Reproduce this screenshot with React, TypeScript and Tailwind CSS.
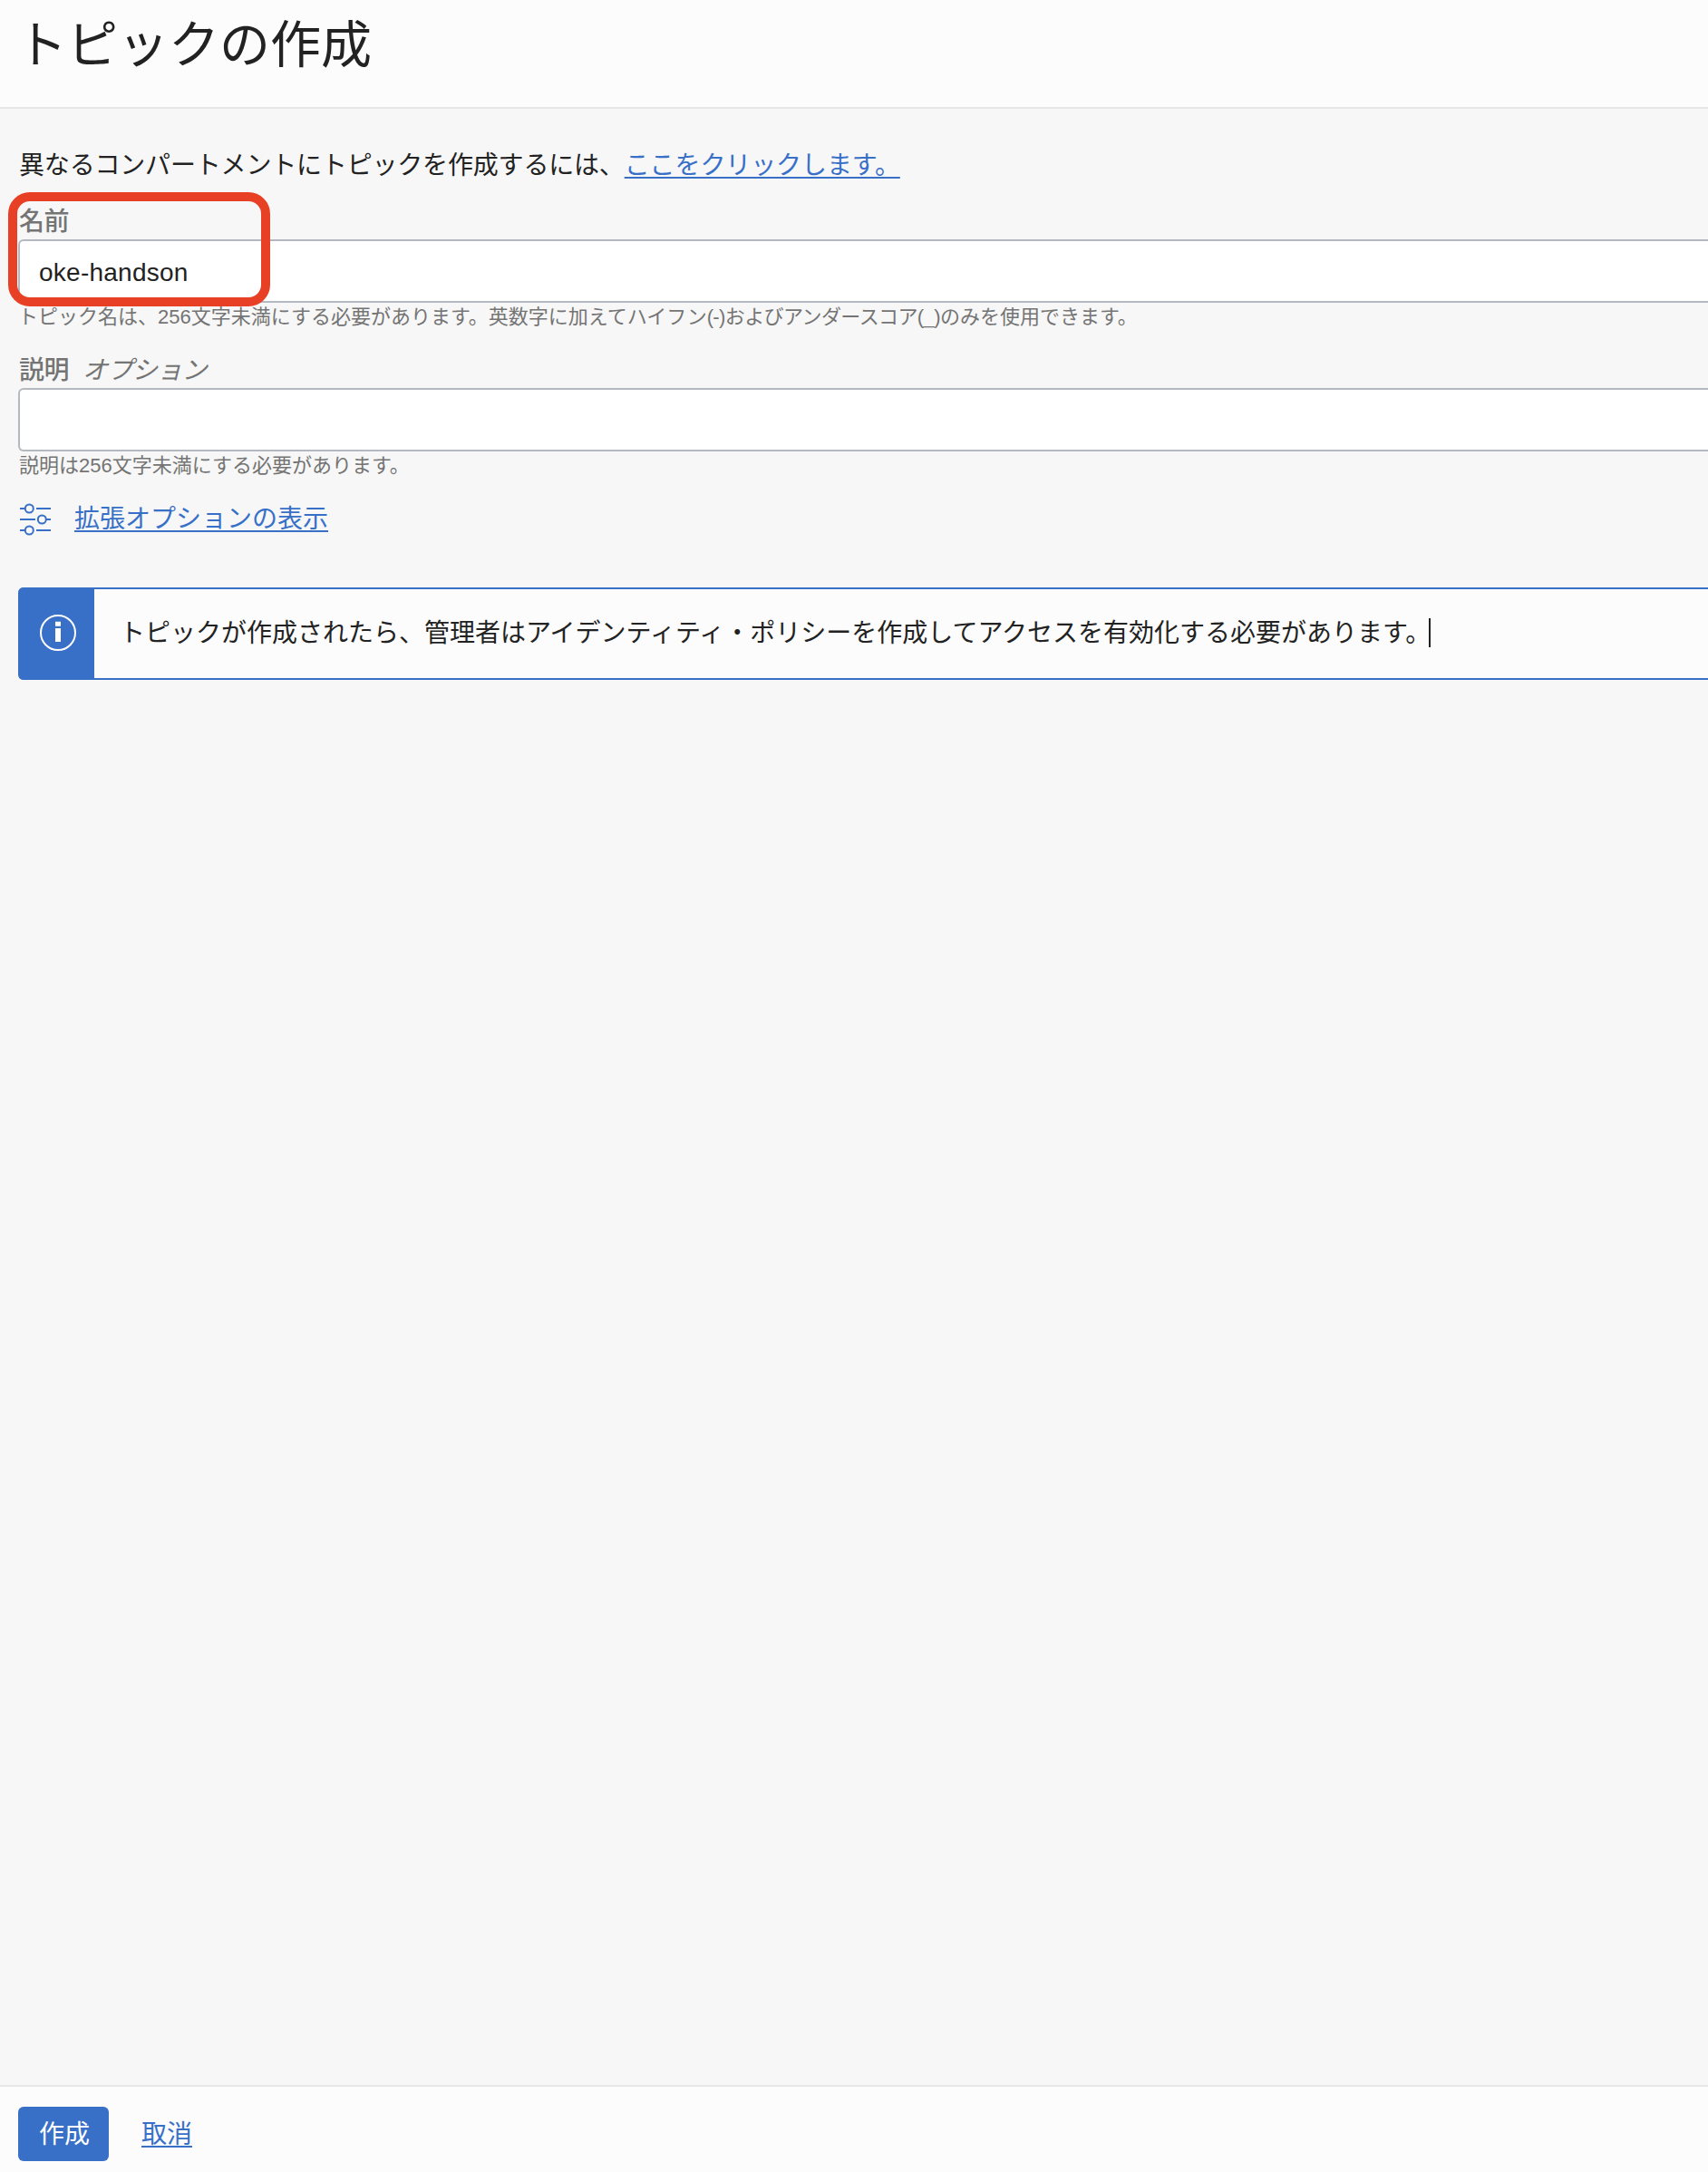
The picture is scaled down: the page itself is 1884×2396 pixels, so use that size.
function Sliders() {
  return (
    <svg className="h-9 w-[35px] shrink-0" viewBox="0 0 35 36" fill="none" stroke="#3870c8" strokeWidth="2">
      <path d="M0 6h6M18 6h16M0 18h17M29 18h5M0 30h6M18 30h16" />
      <circle cx="10.3" cy="6" r="4.5" />
      <circle cx="24.3" cy="18" r="4.5" />
      <circle cx="10.3" cy="30" r="4.5" />
    </svg>
  );
}

function Info() {
  return (
    <svg className="h-10 w-10" viewBox="0 0 40 40" fill="none">
      <circle cx="20" cy="20" r="19" stroke="#fff" strokeWidth="2" />
      <path d="M17 7.7h6v5h-6zM17 15h6v15h-6z" fill="#fff" />
    </svg>
  );
}

export default function App() {
  return (
    <div className="flex h-[2396px] w-full flex-col overflow-hidden bg-[#f7f7f7] font-['Liberation_Sans','Noto_Sans_CJK_JP',sans-serif] text-[28px] text-[#222]" lang="ja">
      <header className="h-[120px] shrink-0 border-b-2 border-[#e6e6e6] bg-[#fcfcfc] pl-[18px]">
        <h1 className="h-[100px] text-[56px] leading-[100px]">トピックの作成</h1>
      </header>
      <main className="flex grow flex-col pl-5">
        <p className="mt-[43px] ml-px h-10 leading-10 tracking-[-0.18px] whitespace-nowrap">
          異なるコンパートメントにトピックを作成するには、
          <a className="tracking-[-0.1px] text-[#3870c8] underline decoration-2 underline-offset-[3px]">ここをクリックします。</a>
        </p>
        <section className="relative mt-[21px] h-[142px]">
          <label className="block h-10 pl-px font-medium leading-[42px] tracking-[-0.5px] text-[#747474]">名前</label>
          <div className="flex h-[70px] items-center rounded-l-md border-2 border-r-0 border-[#b4b9bf] bg-white pl-[21px]">
            <span className="pt-1 leading-[66px] tracking-[0.25px]">oke-handson</span>
          </div>
          <p className="h-8 text-[22px] leading-8 whitespace-nowrap text-[#747474]">
            トピック名は、256文字未満にする必要があります。英数字に加えてハイフン
            <span className="tracking-[-0.6px]">(-)およびアンダースコア(_)</span>のみを使用できます。
          </p>
          <div className="pointer-events-none absolute top-[-12px] left-[-11px] h-[126px] w-[289px] rounded-3xl border-10 border-[#e84025]" />
        </section>
        <section className="mt-[22px]">
          <label className="flex h-10 gap-[15px] pl-px font-medium leading-[42px] text-[#747474]">
            <span className="tracking-[-0.5px]">説明</span>
            <em className="font-normal tracking-[-0.6px] italic">オプション</em>
          </label>
          <div className="h-[70px] rounded-l-md border-2 border-r-0 border-[#b4b9bf] bg-white" />
          <p className="h-8 pl-px text-[22px] leading-8 whitespace-nowrap text-[#747474]">説明は256文字未満にする必要があります。</p>
        </section>
        <div className="mt-[23px] flex h-10 items-center gap-[25px] pl-0.5 text-[#3870c8]">
          <Sliders />
          <a className="leading-10 underline decoration-2 underline-offset-[3px]">拡張オプションの表示</a>
        </div>
        <div className="mt-[55px] flex h-[102px] rounded-l-md border-y-2 border-[#3870c8] bg-[#fcfcfc]">
          <div className="-my-0.5 flex w-[84px] shrink-0 items-center justify-center rounded-l-md bg-[#3870c8] pl-1 pb-0.5">
            <Info />
          </div>
          <div className="flex h-[98px] items-center pl-7">
            <span className="whitespace-nowrap">
              トピックが作成されたら、管理者はアイデンティティ・ポリシーを作成してアクセスを有効化する必要があります。
            </span>
            <span className="-mt-0.5 -ml-0.5 h-8 w-0.5 bg-[#222]" />
          </div>
        </div>
      </main>
      <footer className="flex h-24 shrink-0 items-start border-t-2 border-[#e6e6e6] bg-[#fcfcfc] pt-[22px] pl-5">
        <button className="h-[60px] w-[100px] rounded-md bg-[#3870c8] pl-0.5 leading-[62px] text-white">作成</button>
        <a className="ml-9 leading-[62px] text-[#3870c8] underline decoration-2 underline-offset-[3px]">取消</a>
      </footer>
    </div>
  );
}
